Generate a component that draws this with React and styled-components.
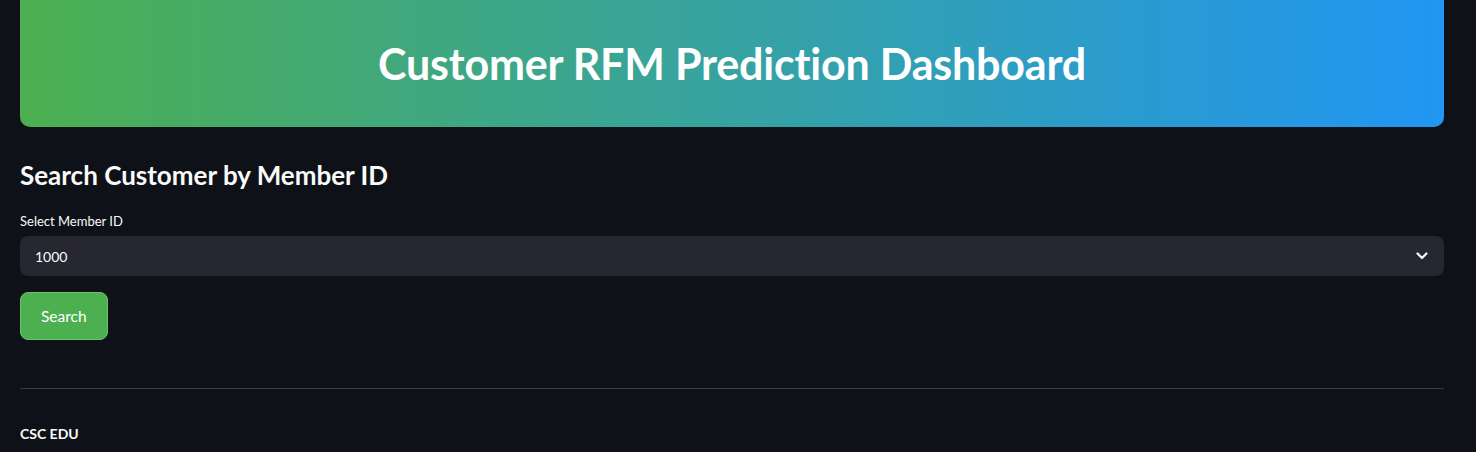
import React from "react";
import styled, { createGlobalStyle } from "styled-components";

const Global = createGlobalStyle`
  html, body { margin: 0; padding: 0; background: #0e1117; }
  body { font-family: "Lato", "Noto Sans", sans-serif; color: #fafafa; }
  * { box-sizing: border-box; }
`;

const Page = styled.div`
  padding: 0 32px 0 20px;
  display: flex;
  flex-direction: column;
`;

const Banner = styled.div`
  height: 127px;
  border-radius: 0 0 10px 10px;
  background: linear-gradient(90deg, #4caf50 0%, #2196f3 100%);
  display: flex;
  align-items: center;
  justify-content: center;
`;

const Title = styled.h1`
  margin: 0;
  font-size: 43px;
  font-weight: 700;
  color: #ffffff;
  letter-spacing: -0.2px;
`;

const Heading = styled.h3`
  margin: 33px 0 0;
  font-size: 26px;
  font-weight: 700;
  line-height: 30px;
`;

const Label = styled.label`
  margin-top: 23px;
  font-size: 13px;
  line-height: 16px;
`;

const Select = styled.div`
  margin-top: 7px;
  height: 40px;
  border-radius: 8px;
  background: #262730;
  display: flex;
  align-items: center;
  justify-content: space-between;
  padding: 0 16px 0 15px;
  font-size: 14px;
`;

const ButtonRow = styled.div`
  margin-top: 16px;
  display: flex;
`;

const Button = styled.button`
  height: 48px;
  padding: 0 20px;
  border-radius: 8px;
  border: 1px solid #6cc070;
  background: #4caf50;
  color: #ffffff;
  font-family: inherit;
  font-size: 15.5px;
`;

const Divider = styled.hr`
  margin: 48px 0 0;
  border: none;
  border-top: 1px solid #3a3c43;
  height: 0;
`;

const Footer = styled.div`
  margin-top: 36px;
  font-size: 14px;
  font-weight: 700;
`;

const Chevron = () => (
  <svg width="12" height="8" viewBox="0 0 12 8">
    <path d="M1.5 1.5 L6 6 L10.5 1.5" stroke="#fafafa" strokeWidth="2.2" fill="none" strokeLinecap="round" strokeLinejoin="round" />
  </svg>
);

export default function App() {
  return (
    <>
      <Global />
      <Page>
        <Banner>
          <Title>Customer RFM Prediction Dashboard</Title>
        </Banner>
        <Heading>Search Customer by Member ID</Heading>
        <Label>Select Member ID</Label>
        <Select>
          <span>1000</span>
          <Chevron />
        </Select>
        <ButtonRow>
          <Button>Search</Button>
        </ButtonRow>
        <Divider />
        <Footer>CSC EDU</Footer>
      </Page>
    </>
  );
}
